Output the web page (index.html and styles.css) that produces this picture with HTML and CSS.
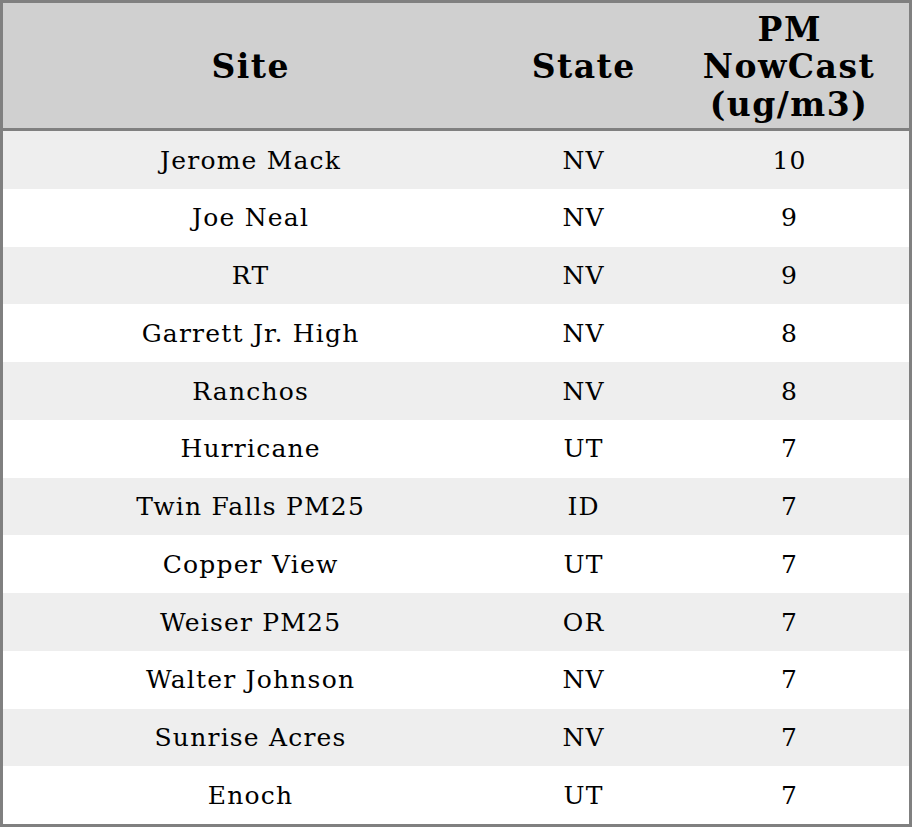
FILE: index.html
```html
<!DOCTYPE html>
<html>
<head>
<meta charset="utf-8">
<link rel="stylesheet" href="styles.css">
</head>
<body>
<table class="aq-table">
  <colgroup>
    <col class="col-site">
    <col class="col-state">
    <col class="col-pm">
  </colgroup>
  <thead>
    <tr>
      <th>Site</th>
      <th>State</th>
      <th>PM<br>NowCast<br>(ug/m3)</th>
    </tr>
  </thead>
  <tbody>
    <tr><td>Jerome Mack</td><td>NV</td><td>10</td></tr>
    <tr><td>Joe Neal</td><td>NV</td><td>9</td></tr>
    <tr><td>RT</td><td>NV</td><td>9</td></tr>
    <tr><td>Garrett Jr. High</td><td>NV</td><td>8</td></tr>
    <tr><td>Ranchos</td><td>NV</td><td>8</td></tr>
    <tr><td>Hurricane</td><td>UT</td><td>7</td></tr>
    <tr><td>Twin Falls PM25</td><td>ID</td><td>7</td></tr>
    <tr><td>Copper View</td><td>UT</td><td>7</td></tr>
    <tr><td>Weiser PM25</td><td>OR</td><td>7</td></tr>
    <tr><td>Walter Johnson</td><td>NV</td><td>7</td></tr>
    <tr><td>Sunrise Acres</td><td>NV</td><td>7</td></tr>
    <tr><td>Enoch</td><td>UT</td><td>7</td></tr>
  </tbody>
</table>
</body>
</html>
```

FILE: styles.css
```css
html, body {
  margin: 0;
  padding: 0;
  background: #ffffff;
}

.aq-table {
  width: 912px;
  border: 3px solid #808080;
  border-spacing: 0;
  font-family: "DejaVu Serif", serif;
  color: #000;
  table-layout: fixed;
}

.col-site { width: 494px; }
.col-state { width: 172px; }
.col-pm { width: 240px; }

.aq-table th {
  background: #d0d0d0;
  font-size: 33px;
  line-height: 37.5px;
  font-weight: bold;
  letter-spacing: 1.5px;
  text-indent: 1.5px;
  text-align: center;
  padding: 7.5px 0 5px;
  border-bottom: 3px solid #808080;
}

.aq-table td {
  font-size: 25px;
  line-height: 29px;
  letter-spacing: 1.2px;
  text-indent: 1.2px;
  text-align: center;
  padding: 14.5px 0 14.25px;
}

.aq-table tbody tr:nth-child(odd) td {
  background: #eeeeee;
}
```
